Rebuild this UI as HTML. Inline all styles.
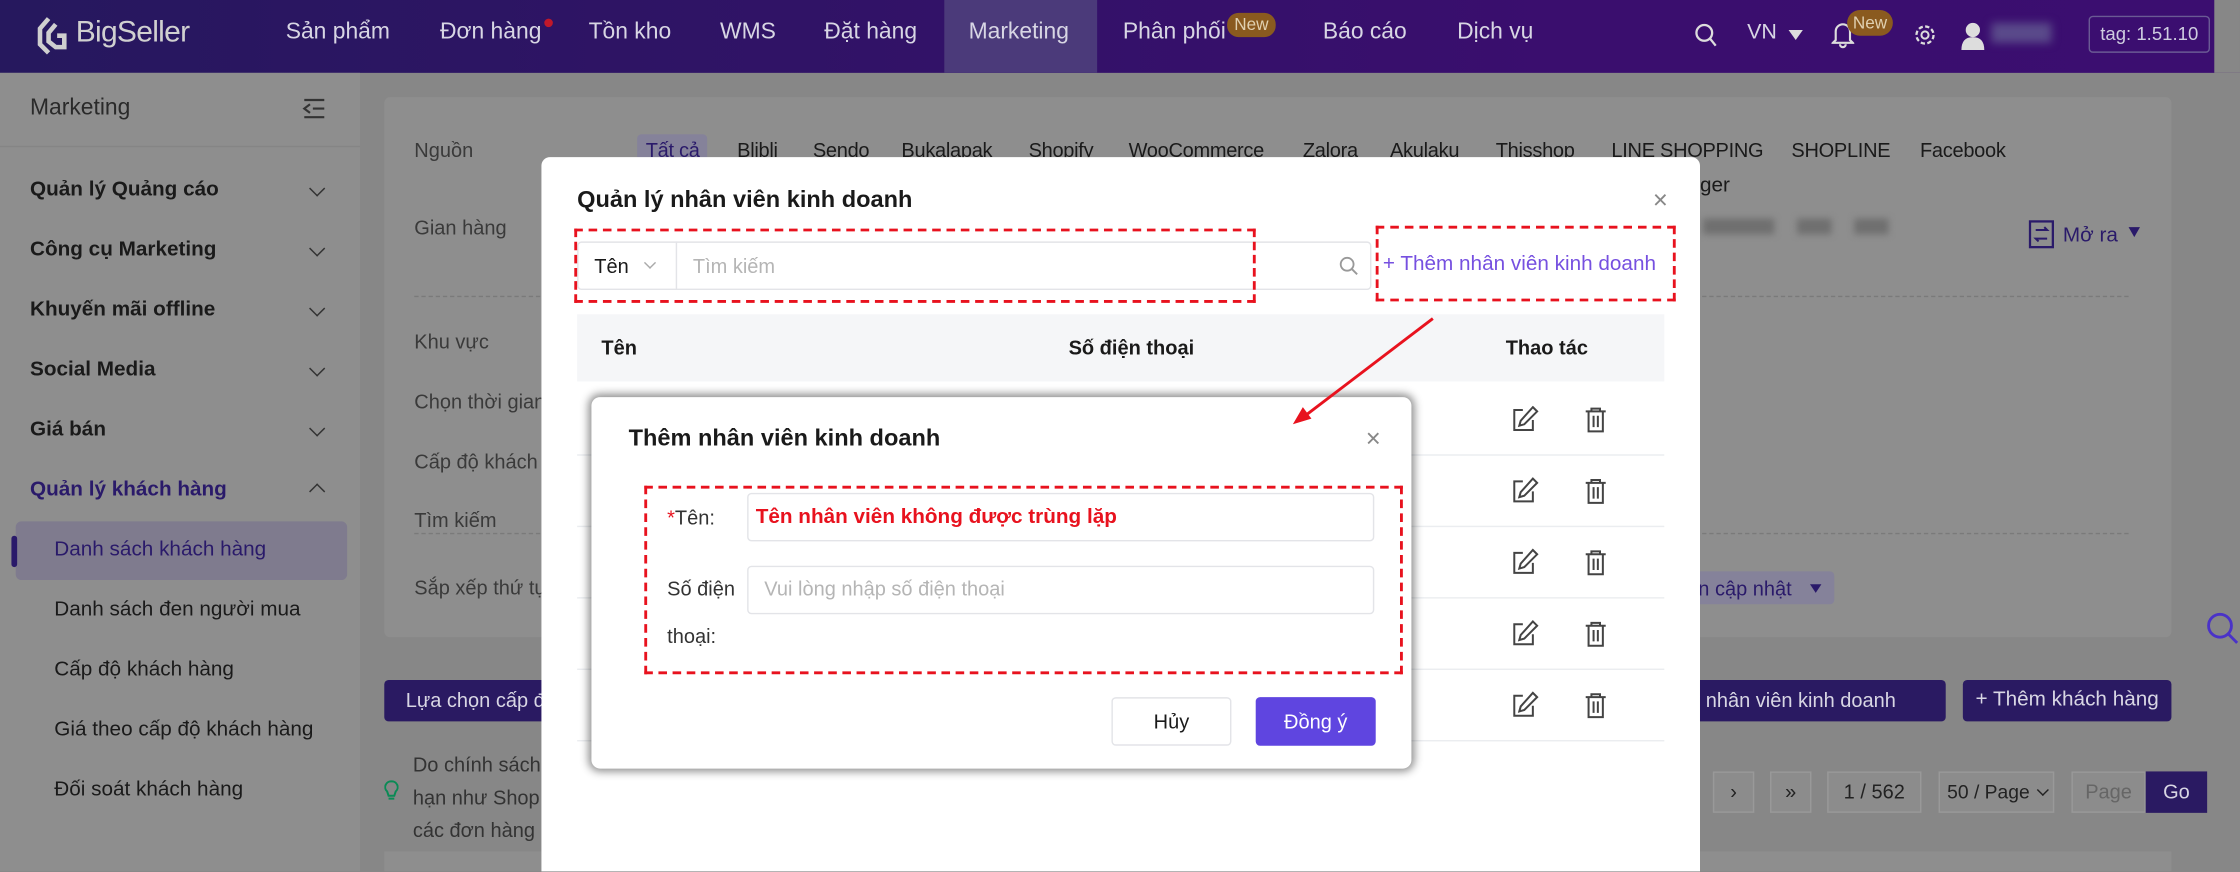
<!DOCTYPE html>
<html><head><meta charset="utf-8"><style>
*{box-sizing:border-box;margin:0;padding:0}
body{width:2240px;height:872px;overflow:hidden;background:#878787;font-family:"Liberation Sans",sans-serif}
#s{position:absolute;left:0;top:0;width:1568px;height:610px;transform:scale(1.428571);transform-origin:0 0;background:#878787;color:#1a1a1a;font-size:14px;overflow:hidden}
.a{position:absolute;white-space:nowrap}
.nav{color:#d8d6e4;font-size:16px;top:14px}
.sb{font-weight:bold;font-size:14.5px;left:21px;color:#1a1a1a}
.sub{left:38px;font-size:14.5px;color:#1a1a1a}
.chev{position:absolute;left:218px;width:8px;height:8px;border-right:1.3px solid #333;border-bottom:1.3px solid #333;transform:rotate(45deg)}
.lbl{color:#3a3a3a;font-size:14px;left:290px}
.dash{position:absolute;border:2px dashed #e8121e}
.row{position:absolute;left:404px;width:761px;height:1px;background:#ebedf0}
.pg{position:absolute;top:540px;height:29px;border:1px solid #999;background:#8c8c8c;font-size:14px;text-align:center;line-height:27px;color:#222;white-space:nowrap}
.src{position:absolute;top:97px;font-size:14px;color:#1a1a1a;white-space:nowrap;letter-spacing:-0.2px}
</style></head><body><div id="s">
<div class="a" style="left:0;top:0;width:1568px;height:51px;background:linear-gradient(90deg,#26185e,#3a0e6e 70%,#3b0e70)"></div>
<div class="a" style="left:661px;top:0;width:107px;height:51px;background:#4b3a7a"></div>
<div class="a" style="left:1550px;top:0;width:18px;height:51px;background:#878787"></div>
<svg class="a" style="left:25px;top:11px" width="26" height="28" viewBox="0 0 26 28"><path d="M9 2 L3 9 V20 L9 26 M14 6 L9 12 V18 L14 22 H20 V14 H15" fill="none" stroke="#cfcfcf" stroke-width="3.2"/></svg>
<div class="a" style="left:53px;top:11px;font-size:21px;color:#d0d0d0;letter-spacing:-0.5px">BigSeller</div>
<div class="a nav" style="left:200px">Sản phẩm</div>
<div class="a nav" style="left:308px">Đơn hàng</div>
<div class="a" style="left:381px;top:13px;width:6px;height:6px;border-radius:3px;background:#c0182a"></div>
<div class="a nav" style="left:412px">Tồn kho</div>
<div class="a nav" style="left:504px">WMS</div>
<div class="a nav" style="left:577px">Đặt hàng</div>
<div class="a nav" style="left:678px">Marketing</div>
<div class="a nav" style="left:786px">Phân phối</div>
<div class="a" style="left:859px;top:9px;width:34px;height:17px;border-radius:8px;background:#8a5a1f;color:#e0d0b0;font-size:12px;line-height:17px;text-align:center">New</div>
<div class="a nav" style="left:926px">Báo cáo</div>
<div class="a nav" style="left:1020px">Dịch vụ</div>
<svg class="a" style="left:1186px;top:16px" width="16" height="18"><circle cx="7" cy="7" r="5.5" fill="none" stroke="#ddd" stroke-width="1.6"/><path d="M11 11 L15 16" stroke="#ddd" stroke-width="1.6"/></svg>
<div class="a nav" style="left:1223px;font-size:15px">VN</div>
<div class="a" style="left:1252px;top:21px;border:5px solid transparent;border-top:7px solid #ddd"></div>
<svg class="a" style="left:1282px;top:14px" width="16" height="20"><path d="M3 14 V8 A5 5 0 0 1 13 8 V14 L15 16 H1 Z M6 17 A2 2 0 0 0 10 17" fill="none" stroke="#ddd" stroke-width="1.5"/></svg>
<div class="a" style="left:1293px;top:7px;width:32px;height:18px;border-radius:9px;background:#8a5a1f;color:#e0d0b0;font-size:12px;line-height:18px;text-align:center">New</div>
<svg class="a" style="left:1339px;top:16px" width="17" height="17"><circle cx="8.5" cy="8.5" r="6" fill="none" stroke="#ddd" stroke-width="1.6" stroke-dasharray="3 1.7"/><circle cx="8.5" cy="8.5" r="2.5" fill="none" stroke="#ddd" stroke-width="1.4"/></svg>
<svg class="a" style="left:1372px;top:15px" width="18" height="20"><circle cx="9" cy="6" r="5" fill="#ddd"/><path d="M1 20 Q1 11 9 11 Q17 11 17 20Z" fill="#ddd"/></svg>
<div class="a" style="left:1394px;top:16px;width:42px;height:14px;background:#5a4a8a;filter:blur(3px)"></div>
<div class="a" style="left:1462px;top:11px;width:85px;height:26px;border:1px solid #6a5a94;border-radius:3px;color:#cfcde0;font-size:13px;line-height:24px;text-align:center">tag: 1.51.10</div>
<div class="a" style="left:0;top:51px;width:252px;height:559px;background:#8e8e8e"></div>
<div class="a" style="left:0;top:51px;width:252px;height:52px;border-bottom:1px solid #858585"></div>
<div class="a" style="left:21px;top:67px;font-size:16px;color:#2a2a2a">Marketing</div>
<svg class="a" style="left:211px;top:68px" width="18" height="16"><path d="M2 2H16M8 8H16M2 14H16M6 5L2 8L6 11" fill="none" stroke="#333" stroke-width="1.5"/></svg>
<div class="a sb" style="top:125px">Quản lý Quảng cáo</div><div class="chev" style="top:128px"></div>
<div class="a sb" style="top:167px">Công cụ Marketing</div><div class="chev" style="top:170px"></div>
<div class="a sb" style="top:209px">Khuyến mãi offline</div><div class="chev" style="top:212px"></div>
<div class="a sb" style="top:251px">Social Media</div><div class="chev" style="top:254px"></div>
<div class="a sb" style="top:293px">Giá bán</div><div class="chev" style="top:296px"></div>
<div class="a sb" style="top:335px;color:#2a1a6a">Quản lý khách hàng</div><div class="chev" style="top:340px;transform:rotate(225deg)"></div>
<div class="a" style="left:11px;top:365px;width:232px;height:41px;border-radius:4px;background:#7f7b8e"></div>
<div class="a" style="left:8px;top:375px;width:4px;height:22px;background:#2a1a6a;border-radius:2px"></div>
<div class="a sub" style="top:377px;color:#2a1a6a">Danh sách khách hàng</div>
<div class="a sub" style="top:419px">Danh sách đen người mua</div>
<div class="a sub" style="top:461px">Cấp độ khách hàng</div>
<div class="a sub" style="top:503px">Giá theo cấp độ khách hàng</div>
<div class="a sub" style="top:545px">Đối soát khách hàng</div>
<div class="a" style="left:269px;top:68px;width:1251px;height:378px;background:#8e8e8e;border-radius:4px"></div>
<div class="a lbl" style="top:97px">Nguồn</div>
<div class="a" style="left:446px;top:94px;width:49px;height:22px;background:#85829a;border-radius:3px"></div>
<div class="src" style="left:452px;color:#2a1a6a">Tất cả</div>
<div class="src" style="left:516px">Blibli</div>
<div class="src" style="left:569px">Sendo</div>
<div class="src" style="left:631px">Bukalapak</div>
<div class="src" style="left:720px">Shopify</div>
<div class="src" style="left:790px">WooCommerce</div>
<div class="src" style="left:912px">Zalora</div>
<div class="src" style="left:973px">Akulaku</div>
<div class="src" style="left:1047px">Thisshop</div>
<div class="src" style="left:1128px">LINE SHOPPING</div>
<div class="src" style="left:1254px">SHOPLINE</div>
<div class="src" style="left:1344px">Facebook</div>
<div class="a" style="left:1190px;top:122px;font-size:14.5px">ger</div>
<div class="a lbl" style="top:151px">Gian hàng</div>
<div class="a" style="left:1192px;top:153px;width:50px;height:11px;background:#6f6f6f;filter:blur(2.5px)"></div>
<div class="a" style="left:1258px;top:153px;width:24px;height:11px;background:#6f6f6f;filter:blur(2.5px)"></div>
<div class="a" style="left:1298px;top:153px;width:24px;height:11px;background:#6f6f6f;filter:blur(2.5px)"></div>
<svg class="a" style="left:1420px;top:154px" width="18" height="20"><rect x="1" y="1" width="16" height="18" fill="none" stroke="#2a1a6a" stroke-width="1.6"/><path d="M5 7H13L11 5M13 13H5L7 15" fill="none" stroke="#2a1a6a" stroke-width="1.4"/></svg>
<div class="a" style="left:1444px;top:157px;color:#2a1a6a;font-size:14.5px">Mở ra</div>
<div class="a" style="left:1490px;top:159px;border:4px solid transparent;border-top:7px solid #2a1a6a"></div>
<div class="a" style="left:290px;top:207px;width:1200px;border-top:1px dashed #7a7a7a"></div>
<div class="a lbl" style="top:231px">Khu vực</div>
<div class="a lbl" style="top:273px">Chọn thời gian</div>
<div class="a lbl" style="top:315px">Cấp độ khách</div>
<div class="a lbl" style="top:356px">Tìm kiếm</div>
<div class="a" style="left:290px;top:373px;width:1200px;border-top:1px dashed #7a7a7a"></div>
<div class="a lbl" style="top:403px">Sắp xếp thứ tự</div>
<div class="a" style="left:1170px;top:400px;width:114px;height:23px;background:#85829a;border-radius:3px"></div>
<div class="a" style="left:1181px;top:404px;color:#2a1a6a">an cập nhật</div>
<div class="a" style="left:1267px;top:409px;border:4px solid transparent;border-top:6px solid #2a1a6a"></div>
<svg class="a" style="left:1544px;top:428px" width="24" height="24"><circle cx="10" cy="10" r="8" fill="none" stroke="#4a32c8" stroke-width="2"/><path d="M16 16L22 22" stroke="#4a32c8" stroke-width="2"/></svg>
<div class="a" style="left:269px;top:476px;width:150px;height:29px;background:#2a1a62;border-radius:3px;color:#d8d6e4;line-height:29px;padding-left:15px">Lựa chọn cấp độ</div>
<div class="a" style="left:1150px;top:476px;width:212px;height:29px;background:#2a1a62;border-radius:3px;color:#d8d6e4;line-height:29px;padding-left:30px">lý nhân viên kinh doanh</div>
<div class="a" style="left:1374px;top:476px;width:146px;height:29px;background:#2a1a62;border-radius:3px;color:#d8d6e4;line-height:29px;text-align:center;font-size:14.5px">+ Thêm khách hàng</div>
<svg class="a" style="left:269px;top:546px" width="10" height="16"><path d="M5 1A4 4 0 0 0 2 8L3 11H7L8 8A4 4 0 0 0 5 1ZM3 13H7" fill="none" stroke="#0a8a55" stroke-width="1.4"/></svg>
<div class="a" style="left:289px;top:524px;color:#333;line-height:23px">Do chính sách<br>hạn như Shop<br>các đơn hàng</div>
<div class="pg" style="left:1199px;width:29px">›</div>
<div class="pg" style="left:1239px;width:29px">»</div>
<div class="pg" style="left:1279px;width:66px">1 / 562</div>
<div class="pg" style="left:1357px;width:81px;text-align:left;padding-left:5px;font-size:13.5px">50 / Page</div>
<div class="a" style="left:1427px;top:550px;width:6px;height:6px;border-right:1.5px solid #222;border-bottom:1.5px solid #222;transform:rotate(45deg)"></div>
<div class="pg" style="left:1450px;width:52px;color:#666">Page</div>
<div class="a" style="left:1502px;top:540px;width:43px;height:29px;background:#2a1a62;color:#d8d6e4;text-align:center;line-height:29px">Go</div>
<div class="a" style="left:269px;top:596px;width:1251px;height:14px;background:#8e8e8e"></div>
<div class="a" style="left:379px;top:110px;width:811px;height:520px;background:#fff;border-radius:6px"></div>
<div class="a" style="left:404px;top:131px;font-size:16.5px;font-weight:bold;color:#1a1a1a">Quản lý nhân viên kinh doanh</div>
<div class="a" style="left:1157px;top:130px;font-size:18px;color:#888">×</div>
<div class="a" style="left:404px;top:169px;width:556px;height:34px;border:1px solid #e3e4e8;border-radius:3px"></div>
<div class="a" style="left:473px;top:169px;width:1px;height:34px;background:#e3e4e8"></div>
<div class="a" style="left:416px;top:178px">Tên</div>
<div class="a" style="left:452px;top:181px;width:6px;height:6px;border-right:1px solid #aaa;border-bottom:1px solid #aaa;transform:rotate(45deg)"></div>
<div class="a" style="left:485px;top:178px;color:#b5b5b5">Tìm kiếm</div>
<svg class="a" style="left:937px;top:179px" width="14" height="14"><circle cx="6" cy="6" r="4.5" fill="none" stroke="#999" stroke-width="1.3"/><path d="M9.5 9.5L13 13" stroke="#999" stroke-width="1.3"/></svg>
<div class="dash" style="left:402px;top:160px;width:477px;height:52px"></div>
<div class="a" style="left:968px;top:177px;color:#7650e0;font-size:14.5px">+ Thêm nhân viên kinh doanh</div>
<div class="dash" style="left:963px;top:158px;width:210px;height:53px"></div>
<div class="a" style="left:404px;top:220px;width:761px;height:47px;background:#f5f6f8"></div>
<div class="a" style="left:421px;top:235px;font-weight:bold">Tên</div>
<div class="a" style="left:748px;top:235px;font-weight:bold">Số điện thoại</div>
<div class="a" style="left:1054px;top:235px;font-weight:bold">Thao tác</div>
<div class="row" style="top:318px"></div><div class="row" style="top:368px"></div><div class="row" style="top:418px"></div><div class="row" style="top:468px"></div><div class="row" style="top:518px"></div>
<svg class="a" style="left:1058px;top:284px" width="70" height="220">
<g id="ic" fill="none" stroke="#444" stroke-width="1.4"><path d="M8 3H2V17H15V10"/><path d="M15 1L18 4L9 13L5.5 14L6.5 10.5Z"/><path d="M52 4H66M56 4V2H62V4M54 4V18H64V4M57.5 7V15M60.5 7V15"/></g>
<use href="#ic" y="50"/><use href="#ic" y="100"/><use href="#ic" y="150"/><use href="#ic" y="200"/>
</svg>
<div class="a" style="left:414px;top:278px;width:574px;height:260px;background:#fff;border-radius:6px;box-shadow:0 0 6px 2px rgba(0,0,0,.45)"></div>
<div class="a" style="left:440px;top:298px;font-size:16.5px;font-weight:bold;color:#1a1a1a">Thêm nhân viên kinh doanh</div>
<div class="a" style="left:956px;top:297px;font-size:18px;color:#888">×</div>
<div class="a" style="left:467px;top:354px;color:#333"><span style="color:#e8121e">*</span>Tên:</div>
<div class="a" style="left:523px;top:345px;width:439px;height:34px;border:1px solid #e3e4e8;border-radius:3px"></div>
<div class="a" style="left:529px;top:354px;color:#e8121e;font-weight:bold;font-size:14.5px">Tên nhân viên không được trùng lặp</div>
<div class="a" style="left:467px;top:404px;color:#333">Số điện</div>
<div class="a" style="left:467px;top:437px;color:#333">thoại:</div>
<div class="a" style="left:523px;top:396px;width:439px;height:34px;border:1px solid #e3e4e8;border-radius:3px"></div>
<div class="a" style="left:535px;top:404px;color:#b5b5b5">Vui lòng nhập số điện thoại</div>
<div class="dash" style="left:451px;top:340px;width:531px;height:132px"></div>
<div class="a" style="left:778px;top:488px;width:84px;height:34px;border:1px solid #e3e4e8;border-radius:3px;text-align:center;line-height:32px">Hủy</div>
<div class="a" style="left:879px;top:488px;width:84px;height:34px;background:#5f45e0;border-radius:3px;text-align:center;line-height:34px;color:#fff">Đồng ý</div>
<svg class="a" style="left:0;top:0" width="1568" height="610"><path d="M1003 223L911 293" stroke="#e8121e" stroke-width="2"/><path d="M905 297L912 285L918 293Z" fill="#e8121e"/></svg>
</div></body></html>
